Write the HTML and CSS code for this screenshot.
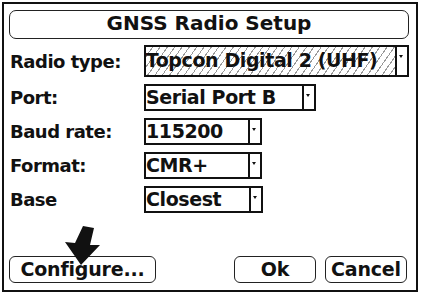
FILE: index.html
```html
<!DOCTYPE html>
<html>
<head>
	<title>GNSS Radio Setup</title>
	<meta charset="utf-8">
	<link rel="stylesheet" href="styles.css">
</head>
<body>
	<div class="frame">
		<div class="title_bar">GNSS Radio Setup</div>
		<div class="rows">
			<div class="row row_tall">
				<div class="label">Radio type:</div>
				<div class="combo combo_hatch combo_radio">
					<div class="combo_text">Topcon Digital 2 (UHF)</div>
					<div class="combo_arrow"></div>
				</div>
			</div>
			<div class="row">
				<div class="label">Port:</div>
				<div class="combo combo_port">
					<div class="combo_text">Serial Port B</div>
					<div class="combo_arrow"></div>
				</div>
			</div>
			<div class="row">
				<div class="label">Baud rate:</div>
				<div class="combo combo_small">
					<div class="combo_text">115200</div>
					<div class="combo_arrow"></div>
				</div>
			</div>
			<div class="row">
				<div class="label">Format:</div>
				<div class="combo combo_small">
					<div class="combo_text">CMR+</div>
					<div class="combo_arrow"></div>
				</div>
			</div>
			<div class="row">
				<div class="label">Base</div>
				<div class="combo combo_base">
					<div class="combo_text">Closest</div>
					<div class="combo_arrow"></div>
				</div>
			</div>
		</div>
		<div class="buttons">
			<div class="btn btn_configure">Configure...</div>
			<div class="btn_group">
				<div class="btn btn_small">Ok</div>
				<div class="btn btn_small">Cancel</div>
			</div>
		</div>
		<svg class="pointer" width="42" height="44" viewBox="0 0 42 44">
			<polygon points="22,1 33,3 29,20 39,20 20,40 4,17 14,18"/>
		</svg>
	</div>
</body>
</html>
```

FILE: styles.css
```css
*{
	box-sizing:border-box;
	margin:0;
	padding:0;
}
body{
	background:white;
	color:#111;
	font-family:"DejaVu Sans",Verdana,sans-serif;
	font-weight:bold;
}
.frame{
	position:relative;
	margin:2px 0 0 2px;
	width:416px;
	height:290px;
	border:2px solid #111;
	padding:6px 7px 0 5px;
	display:flex;
	flex-direction:column;
}
.title_bar{
	height:29px;
	border:1.5px solid #222;
	border-radius:7px;
	font-size:20px;
	line-height:25px;
	text-align:center;
}
.rows{
	margin-top:6px;
	display:flex;
	flex-direction:column;
	gap:7px;
}
.row{
	display:flex;
	align-items:center;
	height:27px;
}
.row_tall{
	height:32px;
}
.label{
	width:135px;
	padding-left:1px;
	font-size:18px;
	letter-spacing:-0.5px;
}
.combo{
	display:flex;
	height:100%;
	border:2px solid #111;
}
.combo_text{
	flex:1;
	font-size:19px;
	line-height:23px;
	letter-spacing:-0.4px;
	white-space:nowrap;
	overflow:hidden;
}
.combo_radio .combo_text{
	line-height:27px;
}
.combo_arrow{
	width:12px;
	border-left:2px solid #111;
	position:relative;
}
.combo_arrow::after{
	content:"";
	position:absolute;
	left:2px;
	top:8px;
	border-left:2.5px solid transparent;
	border-right:2.5px solid transparent;
	border-top:3px solid #111;
}
.combo_hatch .combo_text{
	background:repeating-linear-gradient(125deg,transparent 0,transparent 5px,#999 5px,#999 6px);
}
.combo_radio{
	width:266px;
}
.combo_port{
	width:172px;
}
.combo_small{
	width:118px;
}
.combo_base{
	width:119px;
}
.buttons{
	margin-top:auto;
	margin-bottom:7px;
	display:flex;
	justify-content:space-between;
	padding-right:2px;
}
.btn_group{
	display:flex;
	gap:9px;
}
.btn{
	height:27px;
	border:1.5px solid #222;
	border-radius:6px;
	font-size:19px;
	line-height:24px;
	letter-spacing:-0.2px;
	text-align:center;
}
.btn_configure{
	width:147px;
}
.btn_small{
	width:82px;
}
.pointer{
	position:absolute;
	left:57px;
	top:221px;
}
.pointer polygon{
	fill:#111;
}
```
